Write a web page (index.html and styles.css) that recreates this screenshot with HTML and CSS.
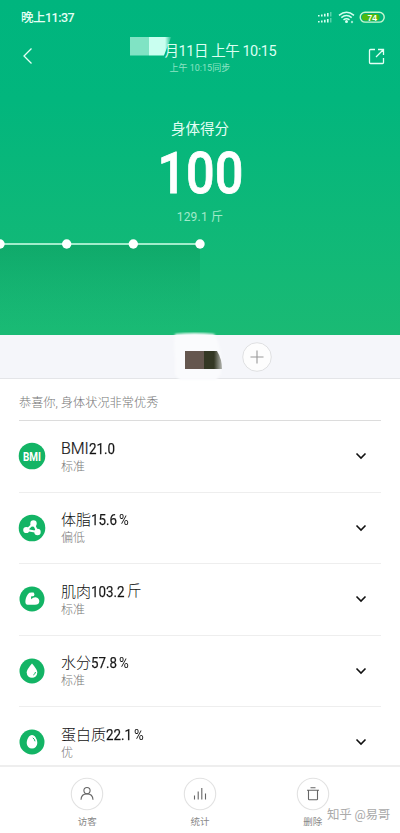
FILE: index.html
```html
<!DOCTYPE html>
<html lang="zh-CN">
<head>
<meta charset="utf-8">
<title>身体得分</title>
<link rel="stylesheet" href="styles.css">
</head>
<body>
<div class="app">
  <section class="hero">
    <div class="status">
      <span class="clock">晚上11:37</span>
      <svg class="status-icons" width="70" height="14" viewBox="0 0 70 14">
        <g fill="#d5fff0">
          <path d="M1 4h1.6v1.6H1zM4 3.5h1.6v2.1H4zM7 2.8h1.6v2.8H7zM10 2h1.6v3.6H10zM1 10h1.6v1.6H1zM4 9.5h1.6v2.1H4zM7 8.8h1.6v2.8H7zM10 8h1.6v3.6H10z"/>
          <path opacity=".5" d="M13.2 1h1.2v4.6h-1.2zM13.2 7h1.2v4.6h-1.2z"/>
          <circle cx="29.500" cy="10.500" r="1.500"/><circle cx="35" cy="11" r="1.200" opacity=".7"/>
        </g>
        <g fill="none" stroke="#d5fff0" stroke-width="1.500">
          <path d="M22 4.300q7.500-6 15 0M24.300 6.600q5.200-4 10.400 0M26.500 8.900q3-2.300 6 0"/>
          <rect x="43.200" y="1.300" width="24" height="9.800" rx="4.900" stroke="#c9f7d0" stroke-width="1.400"/>
        </g>
        <rect x="45" y="3" width="17.500" height="6.400" rx="3" fill="#4fb90e"/>
        <text class="battery" x="55.300" y="9.500" text-anchor="middle">74</text>
      </svg>
    </div>
    <div class="nav">
      <svg class="back" width="12" height="18" viewBox="0 0 12 18"><path d="M9.500 1.500 2 9l7.500 7.500" fill="none" stroke="#e5fff5" stroke-width="1.300"/></svg>
      <div class="heading">
        <div class="date"><i class="mask"></i><span>月11日 上午 10:15</span></div>
        <div class="sync">上午 10:15同步</div>
      </div>
      <svg class="share" width="17" height="17" viewBox="0 0 17 17"><path d="M7 1.500H2.500Q1.500 1.500 1.500 2.500V14.500Q1.500 15.500 2.500 15.500H14.500Q15.500 15.500 15.500 14.500V10M10 1.500H15.500V7M15.500 1.500 8 9" fill="none" stroke="#e5fff5" stroke-width="1.300"/></svg>
    </div>
    <div class="label">身体得分</div>
    <div class="score"><span>100</span></div>
    <div class="weight">129.1 斤</div>
    <svg class="chart" width="400" height="97" viewBox="0 0 400 97">
      <defs><linearGradient id="area" x1="0" y1="0" x2="0" y2="1"><stop offset="0" stop-color="#0c8c50" stop-opacity=".34"/><stop offset="1" stop-color="#1a9a62" stop-opacity="0"/></linearGradient></defs>
      <path d="M0 6H200V90H0z" fill="url(#area)"/>
      <path d="M0 6H200" stroke="#a2eccb" stroke-width="2"/>
      <g fill="#fff"><circle cx="0" cy="6" r="4.700"/><circle cx="66.700" cy="6" r="4.700"/><circle cx="133.300" cy="6" r="4.700"/><circle cx="200" cy="6" r="4.700"/></g>
    </svg>
  </section>
  <section class="users">
    <svg class="avatar" width="60" height="54" viewBox="0 0 60 54">
      <defs>
        <filter id="soft"><feGaussianBlur stdDeviation="1"/></filter>
        <linearGradient id="fade"><stop offset=".55" stop-color="#343824"/><stop offset="1" stop-color="#343824" stop-opacity=".35"/></linearGradient>
      </defs>
      <path d="M5 2Q25 0 44 2Q49 8 51 24V42L46 48H10L5 43V25Q3 10 5 2z" fill="#fafbfd" filter="url(#soft)"/>
      <path d="M15 19h19v18H15z" fill="#65574f"/><path d="M34 19h13Q52 27 52 37H34z" fill="url(#fade)"/>
    </svg>
    <svg class="add" width="30" height="30" viewBox="0 0 30 30"><circle cx="15" cy="15" r="14.300" fill="#fdfdfd" stroke="#dfe0e2"/><path d="M8.500 15h13M15 8.500v13" stroke="#999" stroke-width="1.100"/></svg>
  </section>
  <main class="report">
    <div class="summary">恭喜你, 身体状况非常优秀</div>
    <div class="row">
      <svg class="badge" width="28" height="28" viewBox="0 0 28 28"><circle cx="14" cy="14" r="13.300" fill="#13b465"/><text class="bmi" x="14" y="18.500" text-anchor="middle" textLength="18" lengthAdjust="spacingAndGlyphs">BMI</text></svg>
      <div class="info"><div class="name"><span class="latin">BMI</span><span class="num n4"><b>21.0</b></span></div><div class="state">标准</div></div>
      <svg class="chev" width="12" height="8" viewBox="0 0 12 8"><path d="M1.500 1.500 6 6l4.500-4.500"/></svg>
    </div>
    <div class="row">
      <svg class="badge" width="28" height="28" viewBox="0 0 28 28"><circle cx="14" cy="14" r="13.300" fill="#13b465"/><g fill="#fff"><path d="M15.500 9.500 8.500 16 19.500 18z" fill="none" stroke="#fff" stroke-width="2"/><circle cx="15.500" cy="9.500" r="3.200"/><circle cx="8.300" cy="16" r="3.100"/><circle cx="19.500" cy="18" r="3.200"/></g></svg>
      <div class="info"><div class="name">体脂<span class="num n4"><b>15.6</b></span><span class="pct">%</span></div><div class="state">偏低</div></div>
      <svg class="chev" width="12" height="8" viewBox="0 0 12 8"><path d="M1.500 1.500 6 6l4.500-4.500"/></svg>
    </div>
    <div class="row">
      <svg class="badge" width="28" height="28" viewBox="0 0 28 28"><circle cx="14" cy="14" r="12.500" fill="#13b465"/><path d="M7.500 18C7 14 9 9.500 11.500 7.800Q12.500 7.200 15.600 7.600Q17.200 9.200 16 11L13 11.500L13.200 14.200Q15 12.200 17.500 12.300Q21.500 13 21.300 16.500Q21 19.800 17 19.800H9.500Q7.800 19.800 7.500 18z" fill="#fff"/></svg>
      <div class="info"><div class="name">肌肉<span class="num n5"><b>103.2</b></span><span class="unit">斤</span></div><div class="state">标准</div></div>
      <svg class="chev" width="12" height="8" viewBox="0 0 12 8"><path d="M1.500 1.500 6 6l4.500-4.500"/></svg>
    </div>
    <div class="row">
      <svg class="badge" width="28" height="28" viewBox="0 0 28 28"><circle cx="14" cy="14" r="12.500" fill="#13b465"/><path d="M14 6.500Q19.300 12.500 19.300 15.500A5.300 5.300 0 0 1 8.700 15.500Q8.700 12.500 14 6.500z" fill="#fff"/><path d="M17.500 15Q17.300 17 15.300 18" fill="none" stroke="#13b465" stroke-width="1"/></svg>
      <div class="info"><div class="name">水分<span class="num n4"><b>57.8</b></span><span class="pct">%</span></div><div class="state">标准</div></div>
      <svg class="chev" width="12" height="8" viewBox="0 0 12 8"><path d="M1.500 1.500 6 6l4.500-4.500"/></svg>
    </div>
    <div class="row">
      <svg class="badge" width="28" height="28" viewBox="0 0 28 28"><circle cx="14" cy="14" r="12.500" fill="#13b465"/><path d="M14 7C17 7 19.300 11.500 19.300 15A5.300 5.600 0 0 1 8.700 15C8.700 11.500 11 7 14 7z" fill="#fff"/><path d="M14.800 9.800Q16.700 11 17 13.300" fill="none" stroke="#13b465" stroke-width="1"/></svg>
      <div class="info"><div class="name">蛋白质<span class="num n4"><b>22.1</b></span><span class="pct">%</span></div><div class="state">优</div></div>
      <svg class="chev" width="12" height="8" viewBox="0 0 12 8"><path d="M1.500 1.500 6 6l4.500-4.500"/></svg>
    </div>
  </main>
  <footer class="tabs">
    <div class="tab"><svg width="34" height="34" viewBox="0 0 34 34"><circle class="ring" cx="17" cy="17" r="15.700"/><circle cx="17" cy="13.600" r="3.100"/><path d="M11 22.800Q11.300 16.900 17 16.900T23 22.800"/></svg><span>访客</span></div>
    <div class="tab"><svg width="34" height="34" viewBox="0 0 34 34"><circle class="ring" cx="17" cy="17" r="15.700"/><path d="M11.500 22.500V18.500M15.200 22.500V14.500M18.800 22.500V11M22.500 22.500V16.500"/></svg><span>统计</span></div>
    <div class="tab"><svg width="34" height="34" viewBox="0 0 34 34"><circle class="ring" cx="17" cy="17" r="15.700"/><path d="M11 13.200H23M14.500 10.800H19.500M12.500 13.200V22Q12.500 22.800 13.300 22.800H20.700Q21.500 22.800 21.500 22V13.200"/></svg><span>删除</span></div>
    <div class="watermark">知乎 @易哥</div>
  </footer>
</div>
</body>
</html>
```
FILE: styles.css
```css
* { box-sizing: border-box; }
body { margin: 0; font-family: Roboto, "Noto Sans CJK SC", sans-serif; background: #fff; }
svg { display: block; flex: none; }
.app { width: 400px; height: 833px; display: flex; flex-direction: column; overflow: hidden; }
.hero { height: 335px; flex: none; background: linear-gradient(#00b57e, #02b67d 30%, #1aba74); color: #fff; display: flex; flex-direction: column; align-items: center; }
.status { width: 100%; height: 36px; padding: 0 14px 0 21px; display: flex; justify-content: space-between; align-items: center; flex: none; }
.clock { font-size: 12.500px; font-weight: 500; line-height: 18px; letter-spacing: -.5px; white-space: nowrap; color: #e5fff5; }
.status-icons { margin-right: -1px; }
.battery { font: bold 8.500px "Liberation Sans", sans-serif; fill: #fff; }
.nav { width: 100%; height: 40px; padding: 0 15px 0 22px; display: flex; justify-content: space-between; align-items: center; flex: none; }
.heading { width: 160px; margin-left: 17px; }
.date { height: 22px; position: relative; font-size: 14.500px; line-height: 22px; white-space: nowrap; padding-left: 35px; margin-top: 2px; color: #dcfff2; letter-spacing: -.45px; }
.mask { position: absolute; left: 0; top: -4px; width: 42px; height: 19px; background: linear-gradient(90deg, #80e3c4 0 19px, #c9fff0 19px 35px, rgba(201,255,240,0)); clip-path: polygon(0 0, 100% 0, 82% 100%, 0 100%); }
.sync { font-size: 9px; line-height: 12px; margin-top: -1px; padding-left: 40px; color: #8de4c4; white-space: nowrap; }
.label { margin-top: 44px; font-size: 14.500px; line-height: 20px; color: #e5fff5; }
.score { height: 66px; font-size: 58px; line-height: 66px; font-weight: 500; }
.score span { display: block; transform: scaleX(.87); -webkit-text-stroke: .8px #fff; }
.weight { font-size: 12px; line-height: 18px; margin-top: 2px; color: #a2eaca; letter-spacing: .2px; }
.chart { margin-top: auto; }
.users { height: 44px; flex: none; position: relative; background: #f5f6fa; border-bottom: 1px solid #e4e5e8; display: flex; align-items: center; padding-left: 242px; }
.avatar { position: absolute; left: 170px; top: -3px; }
.report { height: 386px; flex: none; overflow: hidden; padding: 0 19px; }
.summary { height: 42px; padding-top: 14px; border-bottom: 1px solid #dcdcdc; font-size: 12.200px; line-height: 20px; color: #777; font-weight: 300; }
.row { height: 71.500px; display: flex; align-items: center; border-bottom: 1px solid #eee; }
.badge { margin-left: -1px; }
.bmi { font: bold 12.500px Roboto, sans-serif; fill: #fff; }
.info { flex: 1; margin-left: 15px; padding-top: 2px; }
.name { height: 20px; display: flex; align-items: center; font-size: 15px; line-height: 20px; color: #111; font-weight: 300; white-space: nowrap; }
.latin { font-size: 16px; margin-right: .5px; letter-spacing: -.1px; -webkit-text-stroke: .2px #222; }
.num { display: block; }
.num b { display: block; font-weight: 400; font-size: 15.500px; transform: scaleX(.86); transform-origin: left; -webkit-text-stroke: .25px #333; }
.n4 { width: 28px; }
.n5 { width: 36px; }
.pct { width: 11px; font-size: 14px; font-weight: 400; transform: scaleX(.95); transform-origin: left; }
.unit { font-size: 14.500px; }
.state { font-size: 12px; line-height: 17px; color: #777; font-weight: 300; }
.chev { margin-right: 14px; fill: none; stroke: #111; stroke-width: 1.600; }
.tabs { height: 69px; flex: none; position: relative; background: #fff; border-top: 2px solid #eee; display: flex; padding: 10px 31px 0; }
.tab { width: 112.800px; display: flex; flex-direction: column; align-items: center; font-size: 9.500px; line-height: 14px; color: #888; gap: 4px; }
.tab svg { fill: none; stroke: #666; stroke-width: 1.100; }
.tab .ring { stroke: #e2e2e2; fill: #fff; }
.watermark { position: absolute; left: 327px; top: 39px; font-size: 12.500px; line-height: 18px; color: #aaa; white-space: nowrap; letter-spacing: -.2px; }
```
